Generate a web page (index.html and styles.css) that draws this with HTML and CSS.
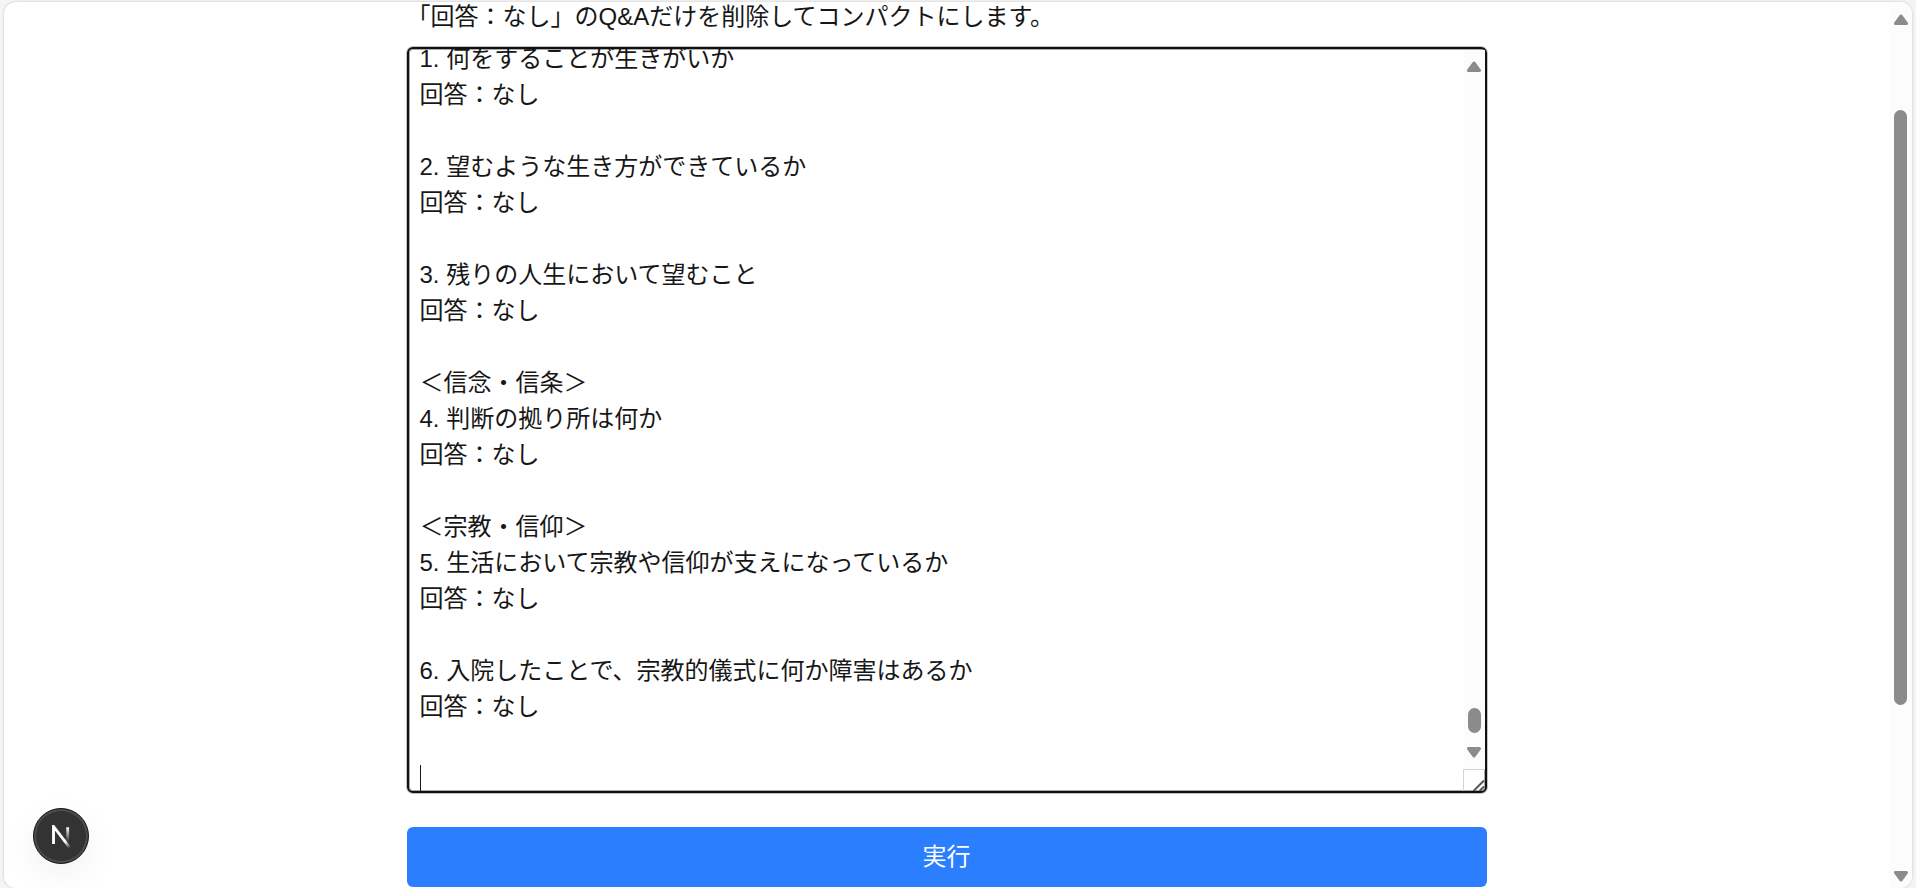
FILE: index.html
```
<!DOCTYPE html>
<html lang="ja">
<head>
    <meta charset="UTF-8">
    <meta name="viewport" content="width=device-width, initial-scale=1.0">
    <title>Q&amp;A コンパクト</title>
    <link rel="stylesheet" href="styles.css">
</head>
<body>
    <div class="page">
        <main class="content">
            <form class="form">
                <label class="description" for="qaText">「回答：なし」のQ&amp;Aだけを削除してコンパクトにします。</label>
                <div class="editor">
                    <textarea class="editor-text" id="qaText" spellcheck="false">
1. 何をすることが生きがいか
回答：なし

2. 望むような生き方ができているか
回答：なし

3. 残りの人生において望むこと
回答：なし

＜信念・信条＞
4. 判断の拠り所は何か
回答：なし

＜宗教・信仰＞
5. 生活において宗教や信仰が支えになっているか
回答：なし

6. 入院したことで、宗教的儀式に何か障害はあるか
回答：なし

</textarea>
                    <span class="caret"></span>
                    <div class="scrollbar editor-scrollbar">
                        <svg class="arrow" viewBox="0 0 14 11"><path d="M7 2 12.500 9.500H1.500Z"/></svg>
                        <div class="thumb"></div>
                        <svg class="arrow" viewBox="0 0 14 11"><path d="M7 9 1.500 1.500h11Z"/></svg>
                    </div>
                    <svg class="resizer" viewBox="0 0 22 22">
                        <path class="resizer-edge" d="M.5 22V.5H22"/>
                        <path class="resizer-grip" d="M10.500 22 21 11.500M16.500 22 21 17.500"/>
                    </svg>
                </div>
                <button class="run-button" type="button">実行</button>
            </form>
        </main>
        <div class="scrollbar page-scrollbar">
            <svg class="arrow" viewBox="0 0 14 11"><path d="M7 2 12.500 9.500H1.500Z"/></svg>
            <div class="thumb"></div>
            <svg class="arrow" viewBox="0 0 14 11"><path d="M7 9 1.500 1.500h11Z"/></svg>
        </div>
    </div>

    <button class="dev-badge" type="button" aria-label="Next.js Dev Tools">
        <svg class="dev-logo" viewBox="0 0 16 16">
            <defs>
                <linearGradient id="diagonal" gradientUnits="userSpaceOnUse" x1="10" y1="11.100" x2="15.500" y2="18">
                    <stop offset="0" stop-color="#fff"/>
                    <stop offset="0.6" stop-color="#fff" stop-opacity="0"/>
                </linearGradient>
                <linearGradient id="stem" gradientUnits="userSpaceOnUse" x1="11.800" y1="1.400" x2="11.790" y2="11">
                    <stop offset="0" stop-color="#fff"/>
                    <stop offset="1" stop-color="#fff" stop-opacity="0"/>
                </linearGradient>
            </defs>
            <path d="M13.300 15.200 2.340 1V12.600" stroke="url(#diagonal)"/>
            <path d="M11.800 1.500 11.810 13.100" stroke="url(#stem)"/>
        </svg>
    </button>

    <script>
        // 先頭行が少し隠れる位置までスクロールしておく
        document.getElementById("qaText").scrollTop = 8;
    </script>
</body>
</html>
```
FILE: styles.css
```
* {
    box-sizing: border-box;
}
body {
    margin: 0;
    height: 100vh;
    padding: 2px 4px 0;
    background-color: #f5f5f5;
    color: #171717;
    font-family: "Liberation Sans", "Noto Sans CJK JP", sans-serif;
    font-size: 24px;
}
.page {
    display: flex;
    height: 100%;
    overflow: hidden;
    background-color: white;
    border-radius: 12px;
    box-shadow: 0 0 3px rgba(0, 0, 0, 0.2);
}
.content {
    flex: 1;
    display: flex;
    justify-content: center;
}
.form {
    display: flex;
    flex-direction: column;
    width: 100%;
    max-width: 1080px;
    padding-bottom: 1px;
}
.description {
    line-height: 30px;
    margin-bottom: 15px;
}
.editor {
    position: relative;
    flex: 1;
    display: flex;
    margin-bottom: 34px;
}
.editor-text {
    flex: 1;
    margin: 0;
    padding: 0 32px 0 11px;
    border: 2px solid #101010;
    border-radius: 6px;
    outline: none;
    box-shadow: 0 0 0 1px #c4c4c4, inset 0 0 0 1px #aaa;
    resize: none;
    overflow: hidden;
    background-color: white;
    color: inherit;
    font: inherit;
    line-height: 36px;
    caret-color: transparent;
}
.caret {
    position: absolute;
    left: 13px;
    bottom: 2px;
    width: 1px;
    height: 26px;
    background-color: #171717;
}
.scrollbar {
    display: flex;
    flex-direction: column;
    align-items: center;
    background-color: #fcfcfc;
}
.arrow {
    flex: none;
    width: 14px;
    height: 11px;
    fill: #8b8b8b;
    stroke: #8b8b8b;
    stroke-width: 3;
    stroke-linejoin: round;
}
.thumb {
    width: 13px;
    border-radius: 7px;
    background-color: #8b8b8b;
}
.page-scrollbar {
    width: 23px;
    padding: 12px 0 6px;
}
.page-scrollbar .thumb {
    flex: 594;
    margin: 85px 0 166px;
}
.editor-scrollbar {
    position: absolute;
    top: 3px;
    right: 2px;
    bottom: 24px;
    width: 21px;
    padding: 11px 0;
}
.editor-scrollbar .thumb {
    height: 25px;
    margin: auto 0 14px;
}
.resizer {
    position: absolute;
    right: 2px;
    bottom: 2px;
    width: 22px;
    height: 22px;
    fill: none;
}
.resizer-edge {
    stroke: #d4d4d4;
}
.resizer-grip {
    stroke: #555;
    stroke-width: 2;
}
.run-button {
    height: 60px;
    padding: 0 0 6px;
    border: none;
    border-radius: 6px;
    background-color: #2b7fff;
    color: white;
    font: inherit;
    cursor: pointer;
}
.run-button:hover {
    background-color: #155dfc;
}
.dev-badge {
    position: fixed;
    left: 33px;
    bottom: 24px;
    display: flex;
    align-items: center;
    justify-content: center;
    width: 56px;
    height: 56px;
    padding: 2px 0 0 2px;
    border: 1px solid #171717;
    border-radius: 50%;
    background-color: #333;
    box-shadow: inset 0 0 0 2px #4d4d4d, 0 12px 36px rgba(0, 0, 0, 0.06);
    cursor: pointer;
}
.dev-logo {
    width: 24px;
    height: 24px;
    fill: none;
    stroke-width: 1.9;
}
```
